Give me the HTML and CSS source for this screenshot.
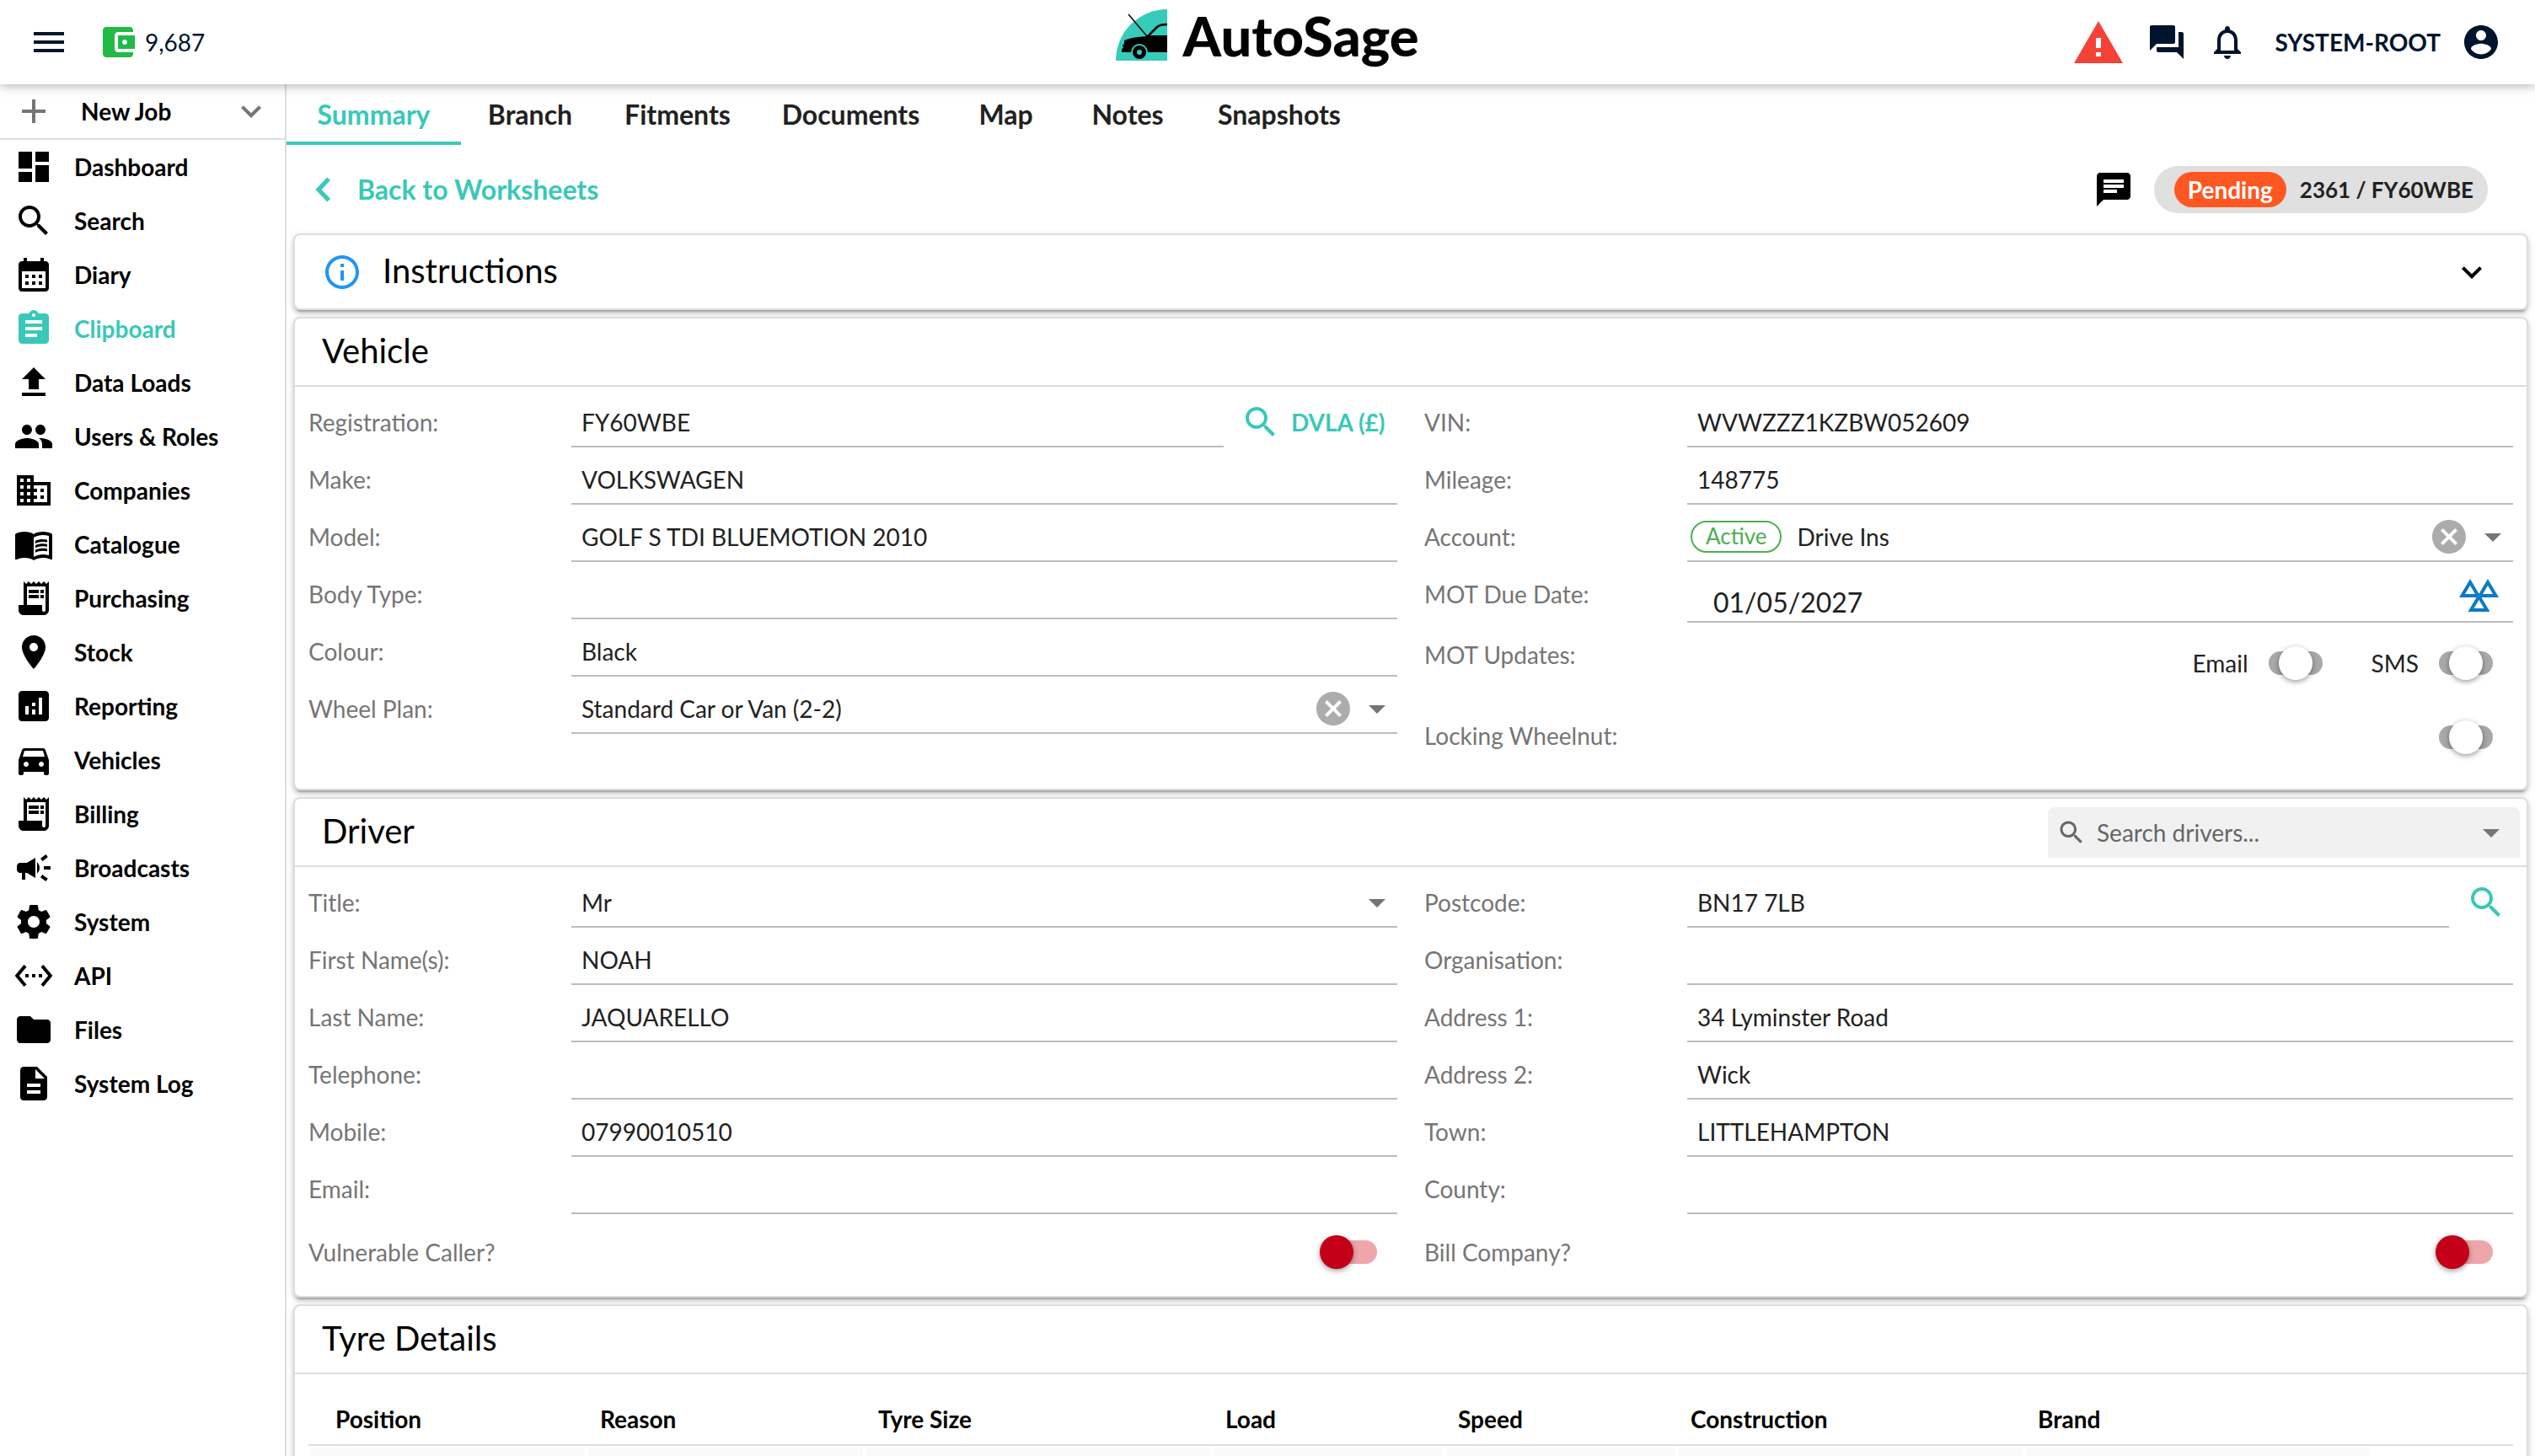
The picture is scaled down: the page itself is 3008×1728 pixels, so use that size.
FILE: index.html
```
<!DOCTYPE html>
<html lang="en">
<head>
    <meta charset="utf-8">
    <title>AutoSage</title>
    <link rel="stylesheet" href="styles.css">
</head>
<body>
    <!-- Icon sprite -->
    <svg class="sprite" aria-hidden="true">
        <symbol id="menu" viewBox="0 0 24 24"><path d="M3 18h18v-2H3v2zm0-5h18v-2H3v2zm0-7v2h18V6H3z"/></symbol>
        <symbol id="wallet" viewBox="0 0 24 24"><path d="M21 18v1c0 1.100-.9 2-2 2H5c-1.110 0-2-.9-2-2V5c0-1.100.89-2 2-2h14c1.100 0 2 .9 2 2v1h-9c-1.110 0-2 .9-2 2v8c0 1.100.89 2 2 2h9zm-9-2h10V8H12v8zm4-2.500c-.83 0-1.500-.67-1.500-1.500s.67-1.500 1.500-1.500 1.500.67 1.500 1.500-.67 1.500-1.500 1.500z"/></symbol>
        <symbol id="forum" viewBox="0 0 24 24"><path d="M21 6h-2v9H6v2c0 .55.45 1 1 1h11l4 4V7c0-.55-.45-1-1-1zm-4 6V3c0-.55-.45-1-1-1H3c-.55 0-1 .45-1 1v14l4-4h10c.55 0 1-.45 1-1z"/></symbol>
        <symbol id="bell" viewBox="0 0 24 24"><path d="M12 22c1.100 0 2-.9 2-2h-4c0 1.100.9 2 2 2zm6-6v-5c0-3.070-1.630-5.640-4.500-6.320V4c0-.83-.67-1.500-1.500-1.500s-1.500.67-1.500 1.500v.68C7.640 5.360 6 7.920 6 11v5l-2 2v1h16v-1l-2-2zm-2 1H8v-6c0-2.480 1.510-4.500 4-4.500s4 2.020 4 4.500v6z"/></symbol>
        <symbol id="account" viewBox="0 0 24 24"><path d="M12 2C6.480 2 2 6.480 2 12s4.480 10 10 10 10-4.480 10-10S17.520 2 12 2zm0 3c1.660 0 3 1.340 3 3s-1.340 3-3 3-3-1.340-3-3 1.340-3 3-3zm0 14.200c-2.500 0-4.710-1.280-6-3.220.03-1.990 4-3.080 6-3.080 1.990 0 5.970 1.090 6 3.080-1.290 1.940-3.500 3.220-6 3.220z"/></symbol>
        <symbol id="add" viewBox="0 0 24 24"><path d="M19 13h-6v6h-2v-6H5v-2h6V5h2v6h6v2z"/></symbol>
        <symbol id="expand" viewBox="0 0 24 24"><path d="M16.590 8.590L12 13.170 7.410 8.590 6 10l6 6 6-6z"/></symbol>
        <symbol id="back" viewBox="0 0 24 24"><path d="M16 6.500L14.100 4.800 7.200 12l6.900 7.200L16 17.500 10.800 12z"/></symbol>
        <symbol id="caret" viewBox="0 0 24 24"><path d="M7 10l5 5 5-5z"/></symbol>
        <symbol id="clear" viewBox="0 0 24 24"><path d="M12 2C6.470 2 2 6.470 2 12s4.470 10 10 10 10-4.470 10-10S17.530 2 12 2zm5 13.590L15.590 17 12 13.410 8.410 17 7 15.590 10.590 12 7 8.410 8.410 7 12 10.590 15.590 7 17 8.410 13.410 12 17 15.590z"/></symbol>
        <symbol id="dashboard" viewBox="0 0 24 24"><path d="M3 13h8V3H3v10zm0 8h8v-6H3v6zm10 0h8V11h-8v10zm0-18v6h8V3h-8z"/></symbol>
        <symbol id="search" viewBox="0 0 24 24"><path d="M15.500 14h-.79l-.28-.27C15.410 12.590 16 11.110 16 9.500 16 5.910 13.090 3 9.500 3S3 5.910 3 9.500 5.910 16 9.500 16c1.610 0 3.090-.59 4.230-1.570l.27.28v.79l5 4.990L20.490 19l-4.990-5zm-6 0C7.010 14 5 11.990 5 9.500S7.010 5 9.500 5 14 7.010 14 9.500 11.990 14 9.500 14z"/></symbol>
        <symbol id="calendar" viewBox="0 0 24 24"><path fill-rule="evenodd" d="M19 4h-1V2h-2v2H8V2H6v2H5c-1.110 0-2 .9-2 2v14c0 1.100.89 2 2 2h14c1.100 0 2-.9 2-2V6c0-1.100-.9-2-2-2zm0 16H5V10h14v10zM7 12h2v2H7zM11 12h2v2h-2zM15 12h2v2h-2zM7 16h2v2H7zM11 16h2v2h-2zM15 16h2v2h-2z"/></symbol>
        <symbol id="clipboard" viewBox="0 0 24 24"><path d="M19 3h-4.180C14.400 1.840 13.300 1 12 1c-1.300 0-2.400.84-2.820 2H5c-1.100 0-2 .9-2 2v14c0 1.100.9 2 2 2h14c1.100 0 2-.9 2-2V5c0-1.100-.9-2-2-2zm-7 0c.55 0 1 .45 1 1s-.45 1-1 1-1-.45-1-1 .45-1 1-1zm2 14H7v-2h7v2zm3-4H7v-2h10v2zm0-4H7V7h10v2z"/></symbol>
        <symbol id="upload" viewBox="0 0 24 24"><path d="M9 16h6v-6h4l-7-7-7 7h4zm-4 2h14v2H5z"/></symbol>
        <symbol id="people" viewBox="0 0 24 24"><path d="M16 11c1.660 0 2.990-1.340 2.990-3S17.660 5 16 5c-1.660 0-3 1.340-3 3s1.340 3 3 3zm-8 0c1.660 0 2.990-1.340 2.990-3S9.660 5 8 5C6.340 5 5 6.340 5 8s1.340 3 3 3zm0 2c-2.330 0-7 1.170-7 3.500V19h14v-2.500c0-2.330-4.670-3.500-7-3.500zm8 0c-.29 0-.62.02-.97.05 1.160.84 1.970 1.970 1.970 3.450V19h6v-2.500c0-2.330-4.670-3.500-7-3.500z"/></symbol>
        <symbol id="business" viewBox="0 0 24 24"><path d="M12 7V3H2v18h20V7H12zM6 19H4v-2h2v2zm0-4H4v-2h2v2zm0-4H4V9h2v2zm0-4H4V5h2v2zm4 12H8v-2h2v2zm0-4H8v-2h2v2zm0-4H8V9h2v2zm0-4H8V5h2v2zm10 12h-8v-2h2v-2h-2v-2h2v-2h-2V9h8v10zm-2-8h-2v2h2v-2zm0 4h-2v2h2v-2z"/></symbol>
        <symbol id="book" viewBox="0 0 24 24"><path d="M21 5c-1.110-.35-2.330-.5-3.500-.5-1.950 0-4.050.4-5.500 1.500-1.450-1.100-3.550-1.500-5.500-1.500S2.450 4.900 1 6v14.650c0 .25.25.5.5.5.1 0 .15-.05.25-.05C3.100 20.450 5.050 20 6.500 20c1.950 0 4.050.4 5.500 1.500 1.350-.85 3.800-1.500 5.500-1.500 1.650 0 3.350.3 4.750 1.050.1.050.15.050.25.050.25 0 .5-.25.5-.5V6c-.6-.45-1.250-.75-2-1zm0 13.500c-1.100-.35-2.300-.5-3.500-.5-1.700 0-4.150.65-5.500 1.500V8c1.350-.85 3.800-1.500 5.500-1.500 1.200 0 2.400.15 3.500.5v11.500z"/><path d="M17.500 10.500c.88 0 1.730.09 2.500.26V9.240c-.79-.15-1.640-.24-2.500-.24-1.700 0-3.240.29-4.500.83v1.660c1.130-.64 2.700-.99 4.500-.99zM13 12.490v1.660c1.130-.64 2.700-.99 4.500-.99.88 0 1.730.09 2.500.26V11.900c-.79-.15-1.640-.24-2.500-.24-1.700 0-3.240.3-4.500.83zM17.500 14.330c-1.700 0-3.240.29-4.500.83v1.660c1.130-.64 2.700-.99 4.500-.99.88 0 1.730.09 2.500.26v-1.520c-.79-.16-1.640-.24-2.500-.24z"/></symbol>
        <symbol id="receipt" viewBox="0 0 24 24"><path d="M19.500 3.500L18 2l-1.500 1.500L15 2l-1.500 1.500L12 2l-1.500 1.500L9 2 7.500 3.500 6 2v14H3v3c0 1.660 1.340 3 3 3h12c1.660 0 3-1.340 3-3V2l-1.500 1.500zM19 19c0 .55-.45 1-1 1s-1-.45-1-1v-3H8V5h11v14z"/><path d="M9 7h6v2H9zM16 7h2v2h-2zM9 10h6v2H9zM16 10h2v2h-2z"/></symbol>
        <symbol id="place" viewBox="0 0 24 24"><path d="M12 2C8.130 2 5 5.130 5 9c0 5.250 7 13 7 13s7-7.750 7-13c0-3.870-3.130-7-7-7zm0 9.500c-1.380 0-2.500-1.120-2.500-2.500s1.120-2.500 2.500-2.500 2.500 1.120 2.500 2.500-1.120 2.500-2.500 2.500z"/></symbol>
        <symbol id="analytics" viewBox="0 0 24 24"><path d="M19 3H5c-1.100 0-2 .9-2 2v14c0 1.100.9 2 2 2h14c1.100 0 2-.9 2-2V5c0-1.100-.9-2-2-2zM9 17H7v-5h2v5zm4 0h-2v-3h2v3zm0-5h-2v-2h2v2zm4 5h-2V7h2v10z"/></symbol>
        <symbol id="car" viewBox="0 0 24 24"><path d="M18.920 6.010C18.720 5.420 18.160 5 17.500 5h-11c-.66 0-1.210.42-1.420 1.010L3 12v8c0 .55.45 1 1 1h1c.55 0 1-.45 1-1v-1h12v1c0 .55.45 1 1 1h1c.55 0 1-.45 1-1v-8l-2.080-5.990zM7.500 16c-.83 0-1.500-.67-1.500-1.500S6.670 13 7.500 13s1.500.67 1.500 1.500S8.330 16 7.500 16zm9 0c-.83 0-1.500-.67-1.500-1.500s.67-1.500 1.500-1.500 1.500.67 1.500 1.500-.67 1.500-1.500 1.500zM5.500 10l1-3.500h11l1 3.500h-13z"/></symbol>
        <symbol id="campaign" viewBox="0 0 24 24"><path d="M18 11v2h4v-2h-4zm-2 6.610c.96.71 2.210 1.650 3.200 2.390.4-.53.8-1.070 1.200-1.600-.99-.74-2.240-1.680-3.200-2.400-.4.540-.8 1.080-1.200 1.610zM20.400 5.600c-.4-.53-.8-1.070-1.200-1.600-.99.74-2.240 1.680-3.200 2.400.4.530.8 1.070 1.200 1.600.96-.72 2.210-1.650 3.200-2.400zM4 9c-1.100 0-2 .9-2 2v2c0 1.100.9 2 2 2h1v4h2v-4h1l5 3V6L8 9H4zm11.500 3c0-1.330-.58-2.530-1.500-3.350v6.690c.92-.81 1.500-2.010 1.500-3.340z"/></symbol>
        <symbol id="settings" viewBox="0 0 24 24"><path d="M19.430 12.980c.04-.32.07-.64.07-.98s-.03-.66-.07-.98l2.110-1.650c.19-.15.24-.42.12-.64l-2-3.460c-.12-.22-.39-.3-.61-.22l-2.490 1c-.52-.4-1.080-.73-1.690-.98l-.38-2.650C14.460 2.180 14.250 2 14 2h-4c-.25 0-.46.18-.49.42l-.38 2.650c-.61.25-1.170.59-1.690.98l-2.490-1c-.23-.09-.49 0-.61.22l-2 3.460c-.13.22-.07.49.12.64l2.110 1.650c-.04.32-.07.65-.07.98s.03.66.07.98l-2.110 1.650c-.19.15-.24.42-.12.64l2 3.460c.12.22.39.3.61.22l2.490-1c.52.4 1.080.73 1.690.98l.38 2.650c.03.24.24.42.49.42h4c.25 0 .46-.18.49-.42l.38-2.650c.61-.25 1.170-.59 1.690-.98l2.490 1c.23.09.49 0 .61-.22l2-3.460c.12-.22.07-.49-.12-.64l-2.110-1.650zM12 15.500c-1.930 0-3.500-1.570-3.500-3.500s1.570-3.500 3.500-3.500 3.500 1.570 3.500 3.500-1.570 3.500-3.500 3.500z"/></symbol>
        <symbol id="api" viewBox="0 0 24 24"><path d="M7.770 6.760L6.230 5.480.82 12l5.410 6.520 1.540-1.280L3.420 12l4.350-5.240zM7 13h2v-2H7v2zm10-2h-2v2h2v-2zm-6 2h2v-2h-2v2zm6.770-7.520l-1.540 1.280L20.580 12l-4.350 5.240 1.540 1.280L23.180 12l-5.410-6.520z"/></symbol>
        <symbol id="folder" viewBox="0 0 24 24"><path d="M10 4H4c-1.100 0-1.990.9-1.990 2L2 18c0 1.100.9 2 2 2h16c1.100 0 2-.9 2-2V8c0-1.100-.9-2-2-2h-8l-2-2z"/></symbol>
        <symbol id="document" viewBox="0 0 24 24"><path d="M14 2H6c-1.100 0-1.990.9-1.990 2L4 20c0 1.100.89 2 1.990 2H18c1.100 0 2-.9 2-2V8l-6-6zm2 16H8v-2h8v2zm0-4H8v-2h8v2zm-3-5V3.500L18.500 9H13z"/></symbol>
        <symbol id="chat" viewBox="0 0 24 24"><path d="M20 2H4c-1.100 0-1.990.9-1.990 2L2 22l4-4h14c1.100 0 2-.9 2-2V4c0-1.100-.9-2-2-2zm-6 12H6v-2h8v2zm4-3H6V9h12v2zm0-3H6V6h12v2z"/></symbol>
        <symbol id="info" viewBox="0 0 24 24"><path d="M11 7h2v2h-2zm0 4h2v6h-2zm1-9C6.480 2 2 6.480 2 12s4.480 10 10 10 10-4.480 10-10S17.520 2 12 2zm0 18c-4.410 0-8-3.590-8-8s3.590-8 8-8 8 3.590 8 8-3.590 8-8 8z"/></symbol>
    </svg>

    <header class="topbar">
        <div class="topbar-left">
            <button class="icon-button" aria-label="Menu"><svg class="icon"><use href="#menu"/></svg></button>
            <svg class="icon wallet"><use href="#wallet"/></svg>
            <span class="credits">9,687</span>
        </div>
        <a class="logo" href="#">
            <svg class="logo-mark" viewBox="0 0 61 61">
                <path fill="#36cbbb" d="M0 61A61 61 0 0 1 61 0V61z"/>
                <path stroke="#000" stroke-width="1.500" d="M15 6L37 32"/>
                <path fill="none" stroke="#000" stroke-width="2.500" d="M37 33L49 21Q52 18 61 18"/>
                <path d="M10 37Q18 33 37 32L39 31H61V51H7V47L9 46L8 43L10 41z"/>
                <circle cx="28" cy="51" r="10" fill="#36cbbb"/>
                <circle cx="28" cy="51" r="8"/>
                <circle cx="28" cy="51" r="3" fill="#36cbbb"/>
            </svg>
            <span>AutoSage</span>
        </a>
        <div class="topbar-right">
            <svg class="warning" viewBox="0 0 58 50"><path fill="#f44336" d="M29 0L58 50H0z"/><path fill="#fff" d="M26 20h6v12h-6zM26 37h6v5h-6z"/></svg>
            <button class="icon-button" aria-label="Messages"><svg class="icon"><use href="#forum"/></svg></button>
            <button class="icon-button" aria-label="Notifications"><svg class="icon"><use href="#bell"/></svg></button>
            <button class="user">SYSTEM-ROOT <svg class="icon"><use href="#account"/></svg></button>
        </div>
    </header>

    <div class="layout">
        <nav class="sidebar">
            <button class="new-job">
                <svg class="icon"><use href="#add"/></svg>
                <span>New Job</span>
                <svg class="icon"><use href="#expand"/></svg>
            </button>
            <a href="#"><svg class="icon"><use href="#dashboard"/></svg>Dashboard</a>
            <a href="#"><svg class="icon"><use href="#search"/></svg>Search</a>
            <a href="#"><svg class="icon"><use href="#calendar"/></svg>Diary</a>
            <a href="#" class="active"><svg class="icon"><use href="#clipboard"/></svg>Clipboard</a>
            <a href="#"><svg class="icon"><use href="#upload"/></svg>Data Loads</a>
            <a href="#"><svg class="icon"><use href="#people"/></svg>Users &amp; Roles</a>
            <a href="#"><svg class="icon"><use href="#business"/></svg>Companies</a>
            <a href="#"><svg class="icon"><use href="#book"/></svg>Catalogue</a>
            <a href="#"><svg class="icon"><use href="#receipt"/></svg>Purchasing</a>
            <a href="#"><svg class="icon"><use href="#place"/></svg>Stock</a>
            <a href="#"><svg class="icon"><use href="#analytics"/></svg>Reporting</a>
            <a href="#"><svg class="icon"><use href="#car"/></svg>Vehicles</a>
            <a href="#"><svg class="icon"><use href="#receipt"/></svg>Billing</a>
            <a href="#"><svg class="icon"><use href="#campaign"/></svg>Broadcasts</a>
            <a href="#"><svg class="icon"><use href="#settings"/></svg>System</a>
            <a href="#"><svg class="icon"><use href="#api"/></svg>API</a>
            <a href="#"><svg class="icon"><use href="#folder"/></svg>Files</a>
            <a href="#"><svg class="icon"><use href="#document"/></svg>System Log</a>
        </nav>

        <main>
            <nav class="tabs">
                <a href="#" class="active">Summary</a>
                <a href="#">Branch</a>
                <a href="#">Fitments</a>
                <a href="#">Documents</a>
                <a href="#">Map</a>
                <a href="#">Notes</a>
                <a href="#">Snapshots</a>
            </nav>

            <div class="toolbar">
                <a href="#" class="back-link"><svg class="icon"><use href="#back"/></svg>Back to Worksheets</a>
                <button class="icon-button" aria-label="Comments"><svg class="icon"><use href="#chat"/></svg></button>
                <div class="job-chip"><span class="status">Pending</span>2361 / FY60WBE</div>
            </div>

            <section class="card instructions">
                <svg class="icon info"><use href="#info"/></svg>
                <h2>Instructions</h2>
                <button class="icon-button" aria-label="Expand"><svg class="icon"><use href="#expand"/></svg></button>
            </section>

            <section class="card">
                <div class="card-header"><h2>Vehicle</h2></div>
                <div class="card-body">
                    <div class="column">
                        <div class="row">
                            <label for="registration">Registration:</label>
                            <div class="field"><input id="registration" type="text" value="FY60WBE"></div>
                            <button class="dvla"><svg class="icon"><use href="#search"/></svg>DVLA (£)</button>
                        </div>
                        <div class="row">
                            <label for="make">Make:</label>
                            <div class="field"><input id="make" type="text" value="VOLKSWAGEN"></div>
                        </div>
                        <div class="row">
                            <label for="model">Model:</label>
                            <div class="field"><input id="model" type="text" value="GOLF S TDI BLUEMOTION 2010"></div>
                        </div>
                        <div class="row">
                            <label for="bodyType">Body Type:</label>
                            <div class="field"><input id="bodyType" type="text"></div>
                        </div>
                        <div class="row">
                            <label for="colour">Colour:</label>
                            <div class="field"><input id="colour" type="text" value="Black"></div>
                        </div>
                        <div class="row">
                            <label for="wheelPlan">Wheel Plan:</label>
                            <div class="field">
                                <select id="wheelPlan"><option>Standard Car or Van (2-2)</option></select>
                                <button class="clear" aria-label="Clear"><svg class="icon"><use href="#clear"/></svg></button>
                                <svg class="icon caret"><use href="#caret"/></svg>
                            </div>
                        </div>
                    </div>
                    <div class="column">
                        <div class="row">
                            <label for="vin">VIN:</label>
                            <div class="field"><input id="vin" type="text" value="WVWZZZ1KZBW052609"></div>
                        </div>
                        <div class="row">
                            <label for="mileage">Mileage:</label>
                            <div class="field"><input id="mileage" type="text" value="148775"></div>
                        </div>
                        <div class="row">
                            <label for="accountName">Account:</label>
                            <div class="field">
                                <span class="badge">Active</span>
                                <select id="accountName"><option>Drive Ins</option></select>
                                <button class="clear" aria-label="Clear"><svg class="icon"><use href="#clear"/></svg></button>
                                <svg class="icon caret"><use href="#caret"/></svg>
                            </div>
                        </div>
                        <div class="row date-row">
                            <label for="motDue">MOT Due Date:</label>
                            <div class="field">
                                <input id="motDue" type="text" value="01/05/2027">
                                <svg class="mot" viewBox="0 0 47 40"><path fill="none" stroke="#0b7bc4" stroke-width="4" d="M3.500 20L13 4L22.500 20zM24.500 20L34 4L43.500 20zM14 37L23.500 21L33 37z"/></svg>
                            </div>
                        </div>
                        <div class="row updates-row">
                            <span class="row-label">MOT Updates:</span>
                            <div class="switches">
                                <label for="motEmail">Email</label>
                                <input id="motEmail" type="checkbox" class="switch unset">
                                <label for="motSms">SMS</label>
                                <input id="motSms" type="checkbox" class="switch unset">
                            </div>
                        </div>
                        <div class="row wheelnut-row">
                            <label for="wheelnut">Locking Wheelnut:</label>
                            <div class="switches"><input id="wheelnut" type="checkbox" class="switch unset"></div>
                        </div>
                    </div>
                </div>
            </section>

            <section class="card">
                <div class="card-header">
                    <h2>Driver</h2>
                    <div class="driver-search">
                        <svg class="icon"><use href="#search"/></svg>
                        <input type="text" placeholder="Search drivers..." aria-label="Search drivers">
                        <svg class="icon caret"><use href="#caret"/></svg>
                    </div>
                </div>
                <div class="card-body">
                    <div class="column">
                        <div class="row">
                            <label for="title">Title:</label>
                            <div class="field">
                                <select id="title"><option>Mr</option></select>
                                <svg class="icon caret"><use href="#caret"/></svg>
                            </div>
                        </div>
                        <div class="row">
                            <label for="firstName">First Name(s):</label>
                            <div class="field"><input id="firstName" type="text" value="NOAH"></div>
                        </div>
                        <div class="row">
                            <label for="lastName">Last Name:</label>
                            <div class="field"><input id="lastName" type="text" value="JAQUARELLO"></div>
                        </div>
                        <div class="row">
                            <label for="telephone">Telephone:</label>
                            <div class="field"><input id="telephone" type="text"></div>
                        </div>
                        <div class="row">
                            <label for="mobile">Mobile:</label>
                            <div class="field"><input id="mobile" type="text" value="07990010510"></div>
                        </div>
                        <div class="row">
                            <label for="email">Email:</label>
                            <div class="field"><input id="email" type="text"></div>
                        </div>
                        <div class="row switch-row">
                            <label for="vulnerable">Vulnerable Caller?</label>
                            <div class="switches"><input id="vulnerable" type="checkbox" class="switch"></div>
                        </div>
                    </div>
                    <div class="column">
                        <div class="row">
                            <label for="postcode">Postcode:</label>
                            <div class="field"><input id="postcode" type="text" value="BN17 7LB"></div>
                            <button class="lookup" aria-label="Find address"><svg class="icon"><use href="#search"/></svg></button>
                        </div>
                        <div class="row">
                            <label for="organisation">Organisation:</label>
                            <div class="field"><input id="organisation" type="text"></div>
                        </div>
                        <div class="row">
                            <label for="address1">Address 1:</label>
                            <div class="field"><input id="address1" type="text" value="34 Lyminster Road"></div>
                        </div>
                        <div class="row">
                            <label for="address2">Address 2:</label>
                            <div class="field"><input id="address2" type="text" value="Wick"></div>
                        </div>
                        <div class="row">
                            <label for="town">Town:</label>
                            <div class="field"><input id="town" type="text" value="LITTLEHAMPTON"></div>
                        </div>
                        <div class="row">
                            <label for="county">County:</label>
                            <div class="field"><input id="county" type="text"></div>
                        </div>
                        <div class="row switch-row">
                            <label for="billCompany">Bill Company?</label>
                            <div class="switches"><input id="billCompany" type="checkbox" class="switch"></div>
                        </div>
                    </div>
                </div>
            </section>

            <section class="card">
                <div class="card-header"><h2>Tyre Details</h2></div>
                <table class="tyres">
                    <colgroup>
                        <col class="col-position"><col class="col-reason"><col class="col-size"><col class="col-load">
                        <col class="col-speed"><col class="col-construction"><col class="col-brand"><col>
                    </colgroup>
                    <thead>
                        <tr><th>Position</th><th>Reason</th><th>Tyre Size</th><th>Load</th><th>Speed</th><th>Construction</th><th>Brand</th><th></th></tr>
                    </thead>
                    <tbody>
                        <tr><td></td><td></td><td></td><td></td><td></td><td></td><td></td><td></td></tr>
                    </tbody>
                </table>
            </section>
        </main>
    </div>
</body>
</html>
```
FILE: styles.css
```
* {
    box-sizing: border-box;
}

body {
    font-family: Lato, "Open Sans", sans-serif;
    font-size: 28px;
    line-height: 36px;
    margin: 0;
    height: 100vh;
    display: flex;
    flex-direction: column;
    overflow: hidden;
    background-color: #fff;
    color: #212121;
}

a {
    color: inherit;
    text-decoration: none;
}

button, input, select {
    font: inherit;
    color: inherit;
    background: none;
    border: none;
    margin: 0;
    padding: 0;
}

button {
    display: flex;
    align-items: center;
    cursor: pointer;
}

h2 {
    margin: 0;
    padding-bottom: 3px;
    font-size: 40px;
    line-height: 48px;
    font-weight: 400;
    color: #000;
}

.sprite {
    display: none;
}

.icon {
    width: 48px;
    height: 48px;
    fill: currentColor;
    flex: none;
}

/* Top bar */
.topbar {
    display: grid;
    grid-template-columns: 1fr auto 1fr;
    align-items: center;
    flex: none;
    height: 100px;
    padding: 0 40px 0 34px;
    background-color: #fff;
    color: #00142d;
    box-shadow: 0 2px 12px rgba(0, 0, 0, 0.3);
    z-index: 1;
}

.topbar-left, .topbar-right {
    display: flex;
    align-items: center;
}

.topbar-right {
    justify-content: flex-end;
    gap: 24px;
}

.wallet {
    margin: 0 8px 0 34px;
    color: #21ba45;
}

.logo {
    display: flex;
    align-items: center;
    gap: 18px;
    height: 100px;
    padding: 0 0 17px 6px;
    font-size: 65px;
    line-height: 72px;
    font-weight: 900;
    color: #000;
}

.logo-mark {
    width: 61px;
    height: 61px;
}

.warning {
    width: 58px;
    height: 50px;
    margin-right: 4px;
}

.user {
    gap: 24px;
    padding-left: 8px;
    font-weight: 700;
}

/* Sidebar */
.layout {
    display: flex;
    flex: 1;
    min-height: 0;
}

.sidebar {
    flex: none;
    width: 340px;
    border-right: 2px solid #ddd;
    color: #000;
    font-weight: 700;
}

.sidebar a {
    display: flex;
    align-items: center;
    gap: 24px;
    height: 64px;
    padding: 0 0 1px 16px;
}

.sidebar .active {
    color: #39c8b8;
}

.new-job {
    width: 100%;
    height: 66px;
    padding: 0 16px 1px;
    border-bottom: 2px solid #ddd;
    font-weight: 700;
    text-align: left;
}

.new-job span {
    flex: 1;
    padding-left: 32px;
}

.new-job .icon {
    color: #757575;
}

/* Main area */
main {
    flex: 1;
    min-width: 0;
}

.tabs {
    display: grid;
    grid-template-columns: 207px 164px 186px 225px 143px 146px 214px;
    height: 72px;
    font-size: 32px;
    font-weight: 700;
    line-height: 72px;
    text-align: center;
}

.tabs a {
    height: 72px;
}

.tabs .active {
    color: #39c8b8;
    border-bottom: 4px solid #39c8b8;
}

.toolbar {
    display: flex;
    align-items: center;
    height: 105px;
    padding: 0 56px 0 20px;
    color: #000;
}

.back-link {
    display: flex;
    align-items: center;
    gap: 16px;
    margin-right: auto;
    font-size: 32px;
    font-weight: 700;
    color: #39c8b8;
}

.job-chip {
    display: flex;
    align-items: center;
    gap: 16px;
    height: 56px;
    margin-left: 24px;
    padding: 0 17px 0 24px;
    border-radius: 28px;
    background-color: #e0e0e0;
    color: #212121;
    font-size: 26px;
    font-weight: 700;
}

.status {
    height: 42px;
    padding: 0 16px;
    border-radius: 21px;
    background-color: #ff5722;
    color: #fff;
    font-size: 28px;
    line-height: 42px;
}

.card {
    margin: 0 8px 8px;
    border: 2px solid #ddd;
    border-radius: 8px;
    background-color: #fff;
    box-shadow: 0 6px 2px -4px rgba(0, 0, 0, 0.2), 0 4px 4px rgba(0, 0, 0, 0.14), 0 2px 10px rgba(0, 0, 0, 0.12);
}

.instructions {
    display: flex;
    align-items: center;
    height: 91px;
    padding: 0 41px 0 32px;
}

.instructions h2 {
    flex: 1;
    padding-left: 24px;
}

.instructions .icon-button {
    color: #000;
}

.info {
    color: #2196f3;
}

.card-header {
    display: flex;
    align-items: center;
    justify-content: space-between;
    height: 81px;
    padding: 0 8px 0 32px;
    border-bottom: 2px solid #ddd;
}

.driver-search {
    display: flex;
    align-items: center;
    width: 560px;
    height: 60px;
    padding: 0 10px;
    border-radius: 8px 8px 0 0;
    background-color: #f1f1f1;
    color: #666;
}

.driver-search .icon:first-child {
    width: 36px;
    height: 36px;
}

.driver-search input {
    flex: 1;
    min-width: 0;
    padding-left: 12px;
}

.driver-search input::placeholder {
    color: #666;
    opacity: 1;
}

.card-body {
    display: grid;
    grid-template-columns: 1fr 1fr;
    gap: 32px;
    padding: 4px 16px 8px;
}

.row {
    display: flex;
    height: 68px;
}

.row > label, .row-label {
    flex: none;
    width: 312px;
    padding-top: 20px;
    color: #757575;
}

.field {
    display: flex;
    align-items: center;
    flex: 1;
    min-width: 0;
    padding-top: 10px;
    border-bottom: 2px solid #bdbdbd;
}

.field input, .field select {
    flex: 1;
    min-width: 0;
    height: 44px;
    padding-left: 12px;
    appearance: none;
}

.clear {
    margin-right: 4px;
    color: #acacac;
}

.caret {
    color: #757575;
}

.dvla, .lookup {
    padding-top: 8px;
    color: #39c8b8;
    font-weight: 700;
}

.dvla {
    width: 206px;
    padding-left: 20px;
    gap: 12px;
    white-space: nowrap;
}

.lookup {
    width: 76px;
    padding-left: 20px;
}

.badge {
    height: 38px;
    margin-left: 4px;
    padding: 0 16px;
    border: 2px solid #4caf50;
    border-radius: 19px;
    color: #4caf50;
    font-size: 26px;
    line-height: 32px;
}

.badge + select {
    padding-left: 18px;
}

.date-row {
    height: 72px;
}

.date-row input {
    padding: 14px 0 0 31px;
    height: 60px;
    font-size: 32px;
}

.mot {
    width: 47px;
    height: 40px;
    margin-right: 17px;
}

.switches {
    display: flex;
    flex: 1;
    align-items: center;
    justify-content: flex-end;
    gap: 24px;
    padding-right: 24px;
}

.updates-row {
    height: 96px;
}

.updates-row .switch + label {
    padding-left: 34px;
}

.wheelnut-row {
    height: 93px;
}

.wheelnut-row .switches {
    height: 80px;
}

.switch-row {
    height: 89px;
    align-items: center;
}

.switch-row > label {
    padding-top: 0;
}

.switch {
    appearance: none;
    position: relative;
    width: 64px;
    height: 28px;
    border-radius: 14px;
    background-color: #eea6aa;
}

/* Thumb sits over the track */
.switch::before {
    content: "";
    position: absolute;
    top: -6px;
    left: -4px;
    width: 40px;
    height: 40px;
    border-radius: 50%;
    background-color: #c40018;
    box-shadow: 0 2px 6px rgba(0, 0, 0, 0.4);
}

.switch.unset {
    background-color: #a8a8a8;
}

.switch.unset::before {
    left: 12px;
    background-color: #fff;
}

/* Tyre table */
.tyres {
    width: calc(100% - 32px);
    margin: 22px 16px 0;
    border-spacing: 0;
    table-layout: fixed;
}

.tyres th {
    height: 63px;
    padding: 0 0 0 16px;
    border-bottom: 2px solid #ddd;
    color: #000;
    text-align: left;
}

.tyres th:first-child {
    padding-left: 32px;
}

.tyres td {
    height: 64px;
    border: 2px solid #fff;
    background-color: #fafafa;
}

.tyres td:last-child {
    background: none;
}

.col-position, .col-reason {
    width: 330px;
}

.col-size, .col-construction, .col-brand {
    width: 412px;
}

.col-load, .col-speed {
    width: 276px;
}
```
